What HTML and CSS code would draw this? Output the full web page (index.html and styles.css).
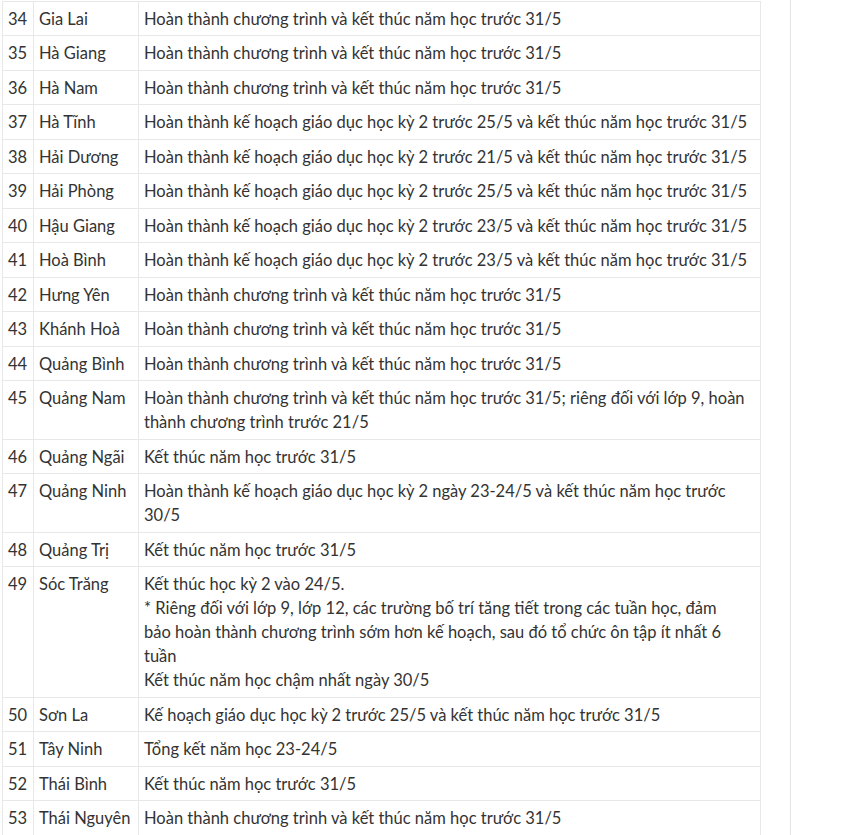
FILE: index.html
```html
<!DOCTYPE html>
<html lang="vi">
<head>
    <meta charset="UTF-8">
    <meta name="viewport" content="width=device-width, initial-scale=1.0">
    <title>Lịch kết thúc năm học</title>
    <link rel="stylesheet" href="styles.css">
</head>
<body>
    <div class="page">
        <div class="content">
            <table class="schedule">
                <colgroup>
                    <col class="col-no">
                    <col class="col-province">
                    <col class="col-plan">
                </colgroup>
                <tbody>
                    <tr><td>34</td><td>Gia Lai</td><td>Hoàn thành chương trình và kết thúc năm học trước 31/5</td></tr>
                    <tr><td>35</td><td>Hà Giang</td><td>Hoàn thành chương trình và kết thúc năm học trước 31/5</td></tr>
                    <tr><td>36</td><td>Hà Nam</td><td>Hoàn thành chương trình và kết thúc năm học trước 31/5</td></tr>
                    <tr><td>37</td><td>Hà Tĩnh</td><td>Hoàn thành kế hoạch giáo dục học kỳ 2 trước 25/5 và kết thúc năm học trước 31/5</td></tr>
                    <tr><td>38</td><td>Hải Dương</td><td>Hoàn thành kế hoạch giáo dục học kỳ 2 trước 21/5 và kết thúc năm học trước 31/5</td></tr>
                    <tr><td>39</td><td>Hải Phòng</td><td>Hoàn thành kế hoạch giáo dục học kỳ 2 trước 25/5 và kết thúc năm học trước 31/5</td></tr>
                    <tr><td>40</td><td>Hậu Giang</td><td>Hoàn thành kế hoạch giáo dục học kỳ 2 trước 23/5 và kết thúc năm học trước 31/5</td></tr>
                    <tr><td>41</td><td>Hoà Bình</td><td>Hoàn thành kế hoạch giáo dục học kỳ 2 trước 23/5 và kết thúc năm học trước 31/5</td></tr>
                    <tr><td>42</td><td>Hưng Yên</td><td>Hoàn thành chương trình và kết thúc năm học trước 31/5</td></tr>
                    <tr><td>43</td><td>Khánh Hoà</td><td>Hoàn thành chương trình và kết thúc năm học trước 31/5</td></tr>
                    <tr><td>44</td><td>Quảng Bình</td><td>Hoàn thành chương trình và kết thúc năm học trước 31/5</td></tr>
                    <tr><td>45</td><td>Quảng Nam</td><td>Hoàn thành chương trình và kết thúc năm học trước 31/5; riêng đối với lớp 9, hoàn thành chương trình trước 21/5</td></tr>
                    <tr><td>46</td><td>Quảng Ngãi</td><td>Kết thúc năm học trước 31/5</td></tr>
                    <tr><td>47</td><td>Quảng Ninh</td><td>Hoàn thành kế hoạch giáo dục học kỳ 2 ngày 23-24/5 và kết thúc năm học trước 30/5</td></tr>
                    <tr><td>48</td><td>Quảng Trị</td><td>Kết thúc năm học trước 31/5</td></tr>
                    <tr>
                        <td>49</td>
                        <td>Sóc Trăng</td>
                        <td>Kết thúc học kỳ 2 vào 24/5.<br>* Riêng đối với lớp 9, lớp 12, các trường bố trí tăng tiết trong các tuần học, đảm<br>bảo hoàn thành chương trình sớm hơn kế hoạch, sau đó tổ chức ôn tập ít nhất 6<br>tuần<br>Kết thúc năm học chậm nhất ngày 30/5</td>
                    </tr>
                    <tr><td>50</td><td>Sơn La</td><td>Kế hoạch giáo dục học kỳ 2 trước 25/5 và kết thúc năm học trước 31/5</td></tr>
                    <tr><td>51</td><td>Tây Ninh</td><td>Tổng kết năm học 23-24/5</td></tr>
                    <tr><td>52</td><td>Thái Bình</td><td>Kết thúc năm học trước 31/5</td></tr>
                    <tr><td>53</td><td>Thái Nguyên</td><td>Hoàn thành chương trình và kết thúc năm học trước 31/5</td></tr>
                </tbody>
            </table>
        </div>
    </div>
</body>
</html>
```

FILE: styles.css
```css
* {
    margin: 0;
    padding: 0;
    box-sizing: border-box;
}

body {
    background: #fff;
    color: #333;
    font-family: 'Lato', 'Open Sans', sans-serif;
    font-size: 16.5px;
    line-height: 24px;
}

.page {
    width: 791px;
    min-height: 835px;
    border-right: 1px solid #e3e3e3;
}

.content {
    padding: 1px 0 0 2px;
}

.schedule {
    width: 759px;
    border-collapse: collapse;
    table-layout: fixed;
}

.col-no {
    width: 31px;
}

.col-province {
    width: 105px;
}

.schedule td {
    border: 1px solid #e8e8e8;
    padding: 4.8px 5px 4.7px;
    vertical-align: top;
    text-align: left;
}
```
